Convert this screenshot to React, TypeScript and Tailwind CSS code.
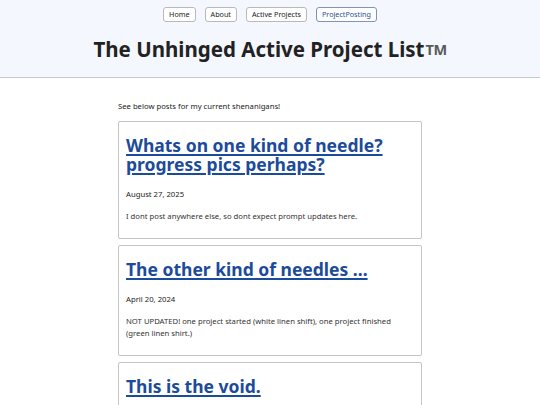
import React from 'react';

const navItems = ['Home', 'About', 'Active Projects', 'ProjectPosting'];

const posts = [
    {
        title: 'Whats on one kind of needle? progress pics perhaps?',
        date: 'August 27, 2025',
        body: 'I dont post anywhere else, so dont expect prompt updates here.',
    },
    {
        title: 'The other kind of needles ...',
        date: 'April 20, 2024',
        body: 'NOT UPDATED! one project started (white linen shift), one project finished (green linen shirt.)',
    },
    {
        title: 'This is the void.',
        date: 'March 2, 2024',
        body: 'Nothing to see here yet.',
    },
];

export default function App() {
    return (
        <div className="min-h-screen bg-white text-[#222] font-['Noto_Sans',sans-serif]">
            {/* Header */}
            <header className="bg-[#f4f7fe] border-b border-[#c9c9c9] pt-[7px] pb-[14px]">
                <nav className="flex justify-center gap-[9px]">
                    {navItems.map((item) => (
                        <a
                            key={item}
                            href="#"
                            className={
                                item === 'ProjectPosting'
                                    ? 'h-[15px] px-[5px] flex items-center rounded-[3px] border border-[#7f93b8] bg-white text-[7.2px] text-[#2b4f8f]'
                                    : 'h-[15px] px-[5px] flex items-center rounded-[3px] border border-[#b9b9b9] bg-white text-[7.2px] text-[#222]'
                            }
                        >
                            {item}
                        </a>
                    ))}
                </nav>
                <h1 className="mt-[13px] text-center text-[20.5px] leading-[28px] font-bold text-[#222]">
                    The Unhinged Active Project List
                    <span className="inline-block align-top mt-[7px] ml-[1px] text-[14.5px] leading-[14px] text-[#5a5a5a] tracking-[-0.5px]">TM</span>
                </h1>
            </header>

            {/* Posts */}
            <main className="w-[304px] mx-auto pt-[22px]">
                <p className="text-[7.7px] leading-[12px] mb-[9px]">See below posts for my current shenanigans!</p>
                <div className="flex flex-col gap-[6px]">
                    {posts.map((post) => (
                        <article key={post.title} className="border border-[#c5c5c5] rounded-[2px] px-[7px] pt-[14px] pb-[16px]">
                            <h2 className="text-[17.5px] leading-[19px] font-bold">
                                <a href="#" className="text-[#1c4b9b] underline decoration-[2px] underline-offset-[2px]">
                                    {post.title}
                                </a>
                            </h2>
                            <p className="mt-[14px] text-[7.7px] leading-[12px]">{post.date}</p>
                            <p className="mt-[10px] text-[7.7px] leading-[12px] text-[#333]">{post.body}</p>
                        </article>
                    ))}
                </div>
            </main>
        </div>
    );
}
